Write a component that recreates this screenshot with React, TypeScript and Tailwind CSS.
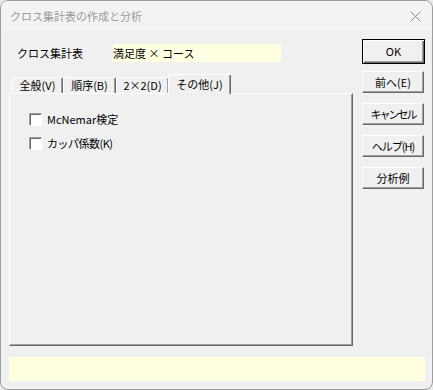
const font = "font-['Noto_Sans_CJK_JP','Noto_Sans',sans-serif]";

type Tab = { label: string; width: string; active?: boolean };

const tabs: Tab[] = [
  { label: "全般(V)", width: "w-[51px]" },
  { label: "順序(B)", width: "w-[53px]" },
  { label: "2×2(D)", width: "w-[53px]" },
  { label: "その他(J)", width: "w-[63px]", active: true },
];

const buttons = [
  { label: "前へ(E)", track: "" },
  { label: "キャンセル", track: "tracking-[-2px]" },
  { label: "ヘルプ(H)", track: "tracking-[-1px]" },
  { label: "分析例", track: "" },
];

function CheckRow({ label, track = "" }: { label: string; track?: string }) {
  return (
    <label className="flex h-[13px] items-center gap-[5px]">
      <span className="box-border h-[13px] w-[13px] border border-t-[#a0a0a0] border-l-[#a0a0a0] border-r-white border-b-white bg-white shadow-[inset_1px_1px_0_#696969]" />
      <span className={`text-[11px] leading-none text-black ${track}`}>{label}</span>
    </label>
  );
}

export default function App() {
  return (
    <div className={`h-[390px] w-[433px] bg-[#e9e9e9] ${font}`}>
      <div className="flex h-[390px] w-[433px] flex-col overflow-hidden rounded-[8px] border border-[#9d9d9d] bg-[#f0f0f0]">
        {/* title bar */}
        <header className="flex h-[30px] shrink-0 items-center justify-between bg-[#f3f3f3] pl-[9px] pr-[11px]">
          <span className="text-[11px] text-[#9a9a9a]">クロス集計表の作成と分析</span>
          <svg width="11" height="11" viewBox="0 0 11 11" className="mt-[1px]">
            <path d="M0.5 0.5 L10.5 10.5 M10.5 0.5 L0.5 10.5" stroke="#8a8a8a" strokeWidth="1" />
          </svg>
        </header>

        <div className="flex flex-1 pl-[8px]">
          {/* left column */}
          <div className="flex w-[344px] flex-col">
            <div className="mt-[13px] flex h-[18px] items-center">
              <span className="ml-[8px] w-[96px] text-[11px] text-black">クロス集計表</span>
              <span className="flex h-[18px] w-[168px] items-center bg-[#ffffe1] text-[11px] text-black">
                満足度 × コース
              </span>
            </div>

            <div className="mt-[12px] flex h-[19px] items-end pl-[3px]">
              {tabs.map((t) =>
                t.active ? (
                  <div
                    key={t.label}
                    className={`relative z-10 -mb-[1px] ml-[-1px] flex h-[20px] ${t.width} items-start justify-center rounded-t-[2px] border-l border-t border-r border-l-white border-t-white border-r-[#696969] bg-[#f0f0f0] pt-[1px] text-[11px] text-black shadow-[inset_-1px_0_0_#a0a0a0]`}
                  >
                    {t.label}
                  </div>
                ) : (
                  <div
                    key={t.label}
                    className={`flex h-[16px] ${t.width} items-center justify-center rounded-t-[2px] border-l border-t border-r border-l-white border-t-white border-r-[#696969] text-[11px] leading-none text-black shadow-[inset_-1px_0_0_#a0a0a0]`}
                  >
                    {t.label}
                  </div>
                ),
              )}
            </div>

            <div className="flex h-[253px] flex-col gap-[11px] border border-l-white border-t-white border-r-[#696969] border-b-[#696969] pl-[19px] pt-[19px] shadow-[inset_-1px_-1px_0_#a0a0a0]">
              <CheckRow label="McNemar検定" />
              <CheckRow label="カッパ係数(K)" track="tracking-[-0.5px]" />
            </div>
          </div>

          {/* right column */}
          <div className="ml-[9px] flex w-[63px] flex-col pt-[8px]">
            <button className="box-border flex h-[25px] w-[63px] items-center justify-center border border-black bg-[#f0f0f0] text-[11px] text-black shadow-[inset_1px_1px_0_#fff,inset_-1px_-1px_0_#696969,inset_-2px_-2px_0_#a0a0a0]">
              OK
            </button>
            <div className="mt-[7px] flex flex-col gap-[10px]">
              {buttons.map((b) => (
                <button
                  key={b.label}
                  className={`box-border flex h-[22px] w-[62px] items-center justify-center border border-l-white border-t-white border-r-[#696969] border-b-[#696969] bg-[#f0f0f0] text-[11px] text-black shadow-[inset_-1px_-1px_0_#a0a0a0] ${b.track}`}
                >
                  {b.label}
                </button>
              ))}
            </div>
          </div>
        </div>

        {/* status bar */}
        <div className="mb-[8px] ml-[8px] mr-[7px] h-[24px] shrink-0 bg-[#ffffe1]" />
      </div>
    </div>
  );
}
